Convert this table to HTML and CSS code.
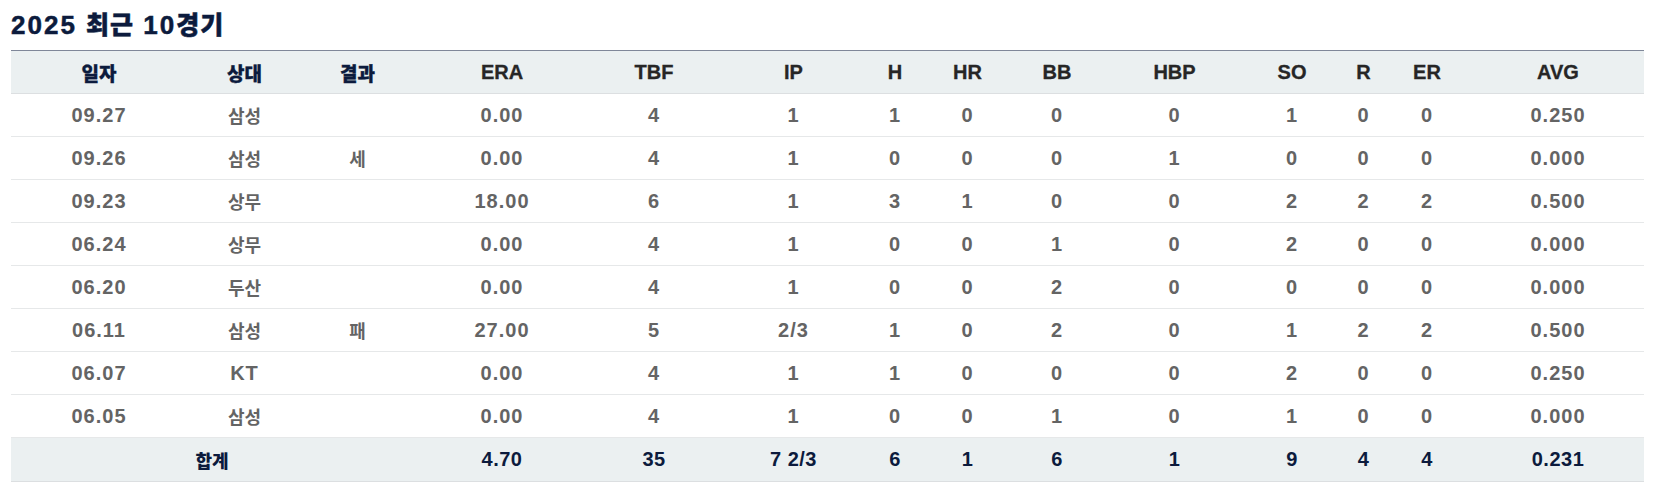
FILE: index.html
```html
<!DOCTYPE html>
<html lang="ko">
<head>
<meta charset="utf-8">
<title>2025 최근 10경기</title>
<link rel="stylesheet" href="styles.css">
</head>
<body>
<section class="recent">
  <h2 class="title">2025 <span class="ko">최근</span> 10<span class="ko">경기</span></h2>
  <table class="stats">
    <colgroup>
      <col class="c1"><col class="c2"><col class="c3"><col class="c4"><col class="c5"><col class="c6"><col class="c7">
      <col class="c8"><col class="c9"><col class="c10"><col class="c11"><col class="c12"><col class="c13"><col class="c14">
    </colgroup>
    <thead>
      <tr>
        <th><span class="ko">일자</span></th><th><span class="ko">상대</span></th><th><span class="ko">결과</span></th>
        <th>ERA</th><th>TBF</th><th>IP</th><th>H</th><th>HR</th><th>BB</th><th>HBP</th><th>SO</th><th>R</th><th>ER</th><th class="last">AVG</th>
      </tr>
    </thead>
    <tbody>
      <tr><td>09.27</td><td><span class="ko">삼성</span></td><td></td><td>0.00</td><td>4</td><td>1</td><td>1</td><td>0</td><td>0</td><td>0</td><td>1</td><td>0</td><td>0</td><td class="last">0.250</td></tr>
      <tr><td>09.26</td><td><span class="ko">삼성</span></td><td><span class="ko">세</span></td><td>0.00</td><td>4</td><td>1</td><td>0</td><td>0</td><td>0</td><td>1</td><td>0</td><td>0</td><td>0</td><td class="last">0.000</td></tr>
      <tr><td>09.23</td><td><span class="ko">상무</span></td><td></td><td>18.00</td><td>6</td><td>1</td><td>3</td><td>1</td><td>0</td><td>0</td><td>2</td><td>2</td><td>2</td><td class="last">0.500</td></tr>
      <tr><td>06.24</td><td><span class="ko">상무</span></td><td></td><td>0.00</td><td>4</td><td>1</td><td>0</td><td>0</td><td>1</td><td>0</td><td>2</td><td>0</td><td>0</td><td class="last">0.000</td></tr>
      <tr><td>06.20</td><td><span class="ko">두산</span></td><td></td><td>0.00</td><td>4</td><td>1</td><td>0</td><td>0</td><td>2</td><td>0</td><td>0</td><td>0</td><td>0</td><td class="last">0.000</td></tr>
      <tr><td>06.11</td><td><span class="ko">삼성</span></td><td><span class="ko">패</span></td><td>27.00</td><td>5</td><td>2/3</td><td>1</td><td>0</td><td>2</td><td>0</td><td>1</td><td>2</td><td>2</td><td class="last">0.500</td></tr>
      <tr><td>06.07</td><td>KT</td><td></td><td>0.00</td><td>4</td><td>1</td><td>1</td><td>0</td><td>0</td><td>0</td><td>2</td><td>0</td><td>0</td><td class="last">0.250</td></tr>
      <tr><td>06.05</td><td><span class="ko">삼성</span></td><td></td><td>0.00</td><td>4</td><td>1</td><td>0</td><td>0</td><td>1</td><td>0</td><td>1</td><td>0</td><td>0</td><td class="last">0.000</td></tr>
    </tbody>
    <tfoot>
      <tr><td colspan="3"><span class="ko">합계</span></td><td>4.70</td><td>35</td><td>7 2/3</td><td>6</td><td>1</td><td>6</td><td>1</td><td>9</td><td>4</td><td>4</td><td class="last">0.231</td></tr>
    </tfoot>
  </table>
</section>
</body>
</html>
```

FILE: styles.css
```css
html, body {
  margin: 0;
  padding: 0;
  background: #ffffff;
}

body {
  font-family: "Liberation Sans", "Noto Sans CJK KR", sans-serif;
}

.recent {
  padding: 0 10px 0 11px;
}

.ko {
  font-family: "Noto Sans CJK KR", "Liberation Sans", sans-serif;
}

.title {
  margin: 0;
  height: 50px;
  line-height: 47px;
  font-size: 26px;
  font-weight: 700;
  color: #0c1b3d;
  letter-spacing: 2px;
  -webkit-text-stroke: 0.5px #0c1b3d;
}

.title .ko {
  font-size: 25px;
  font-weight: 900;
  letter-spacing: 1px;
}

.stats {
  width: 1633px;
  table-layout: fixed;
  border-collapse: collapse;
  border-top: 1px solid #7f8799;
}

.c1 { width: 176px; }
.c2 { width: 115px; }
.c3 { width: 111px; }
.c4 { width: 178px; }
.c5 { width: 126px; }
.c6 { width: 153px; }
.c7 { width: 50px; }
.c8 { width: 95px; }
.c9 { width: 84px; }
.c10 { width: 151px; }
.c11 { width: 84px; }
.c12 { width: 59px; }
.c13 { width: 68px; }
.c14 { width: 183px; }

.stats th,
.stats td {
  padding: 0;
  text-align: center;
  vertical-align: middle;
  font-weight: 700;
  white-space: nowrap;
}

.stats th.last,
.stats td.last {
  padding-left: 11px;
}

.stats thead th {
  height: 42px;
  background: #ebf0f1;
  color: #262626;
  font-size: 20px;
  border-bottom: 1px solid #dcdfe1;
  -webkit-text-stroke: 0.3px #262626;
}

.stats thead th .ko {
  font-size: 19px;
  font-weight: 900;
  color: #0c1b3d;
  -webkit-text-stroke: 0.3px #0c1b3d;
}

.stats tbody td {
  height: 42px;
  color: #646464;
  font-size: 20px;
  letter-spacing: 1px;
  border-bottom: 1px solid #e6e8e9;
}

.stats tbody td .ko {
  font-size: 18px;
  letter-spacing: 0;
}

.stats tfoot td {
  height: 43px;
  background: #ebf0f1;
  color: #0c1b3d;
  font-size: 20px;
  letter-spacing: 0.5px;
  border-bottom: 1px solid #dcdfe1;
}

.stats tfoot td .ko {
  font-size: 18px;
  font-weight: 900;
  letter-spacing: 0;
}
```
